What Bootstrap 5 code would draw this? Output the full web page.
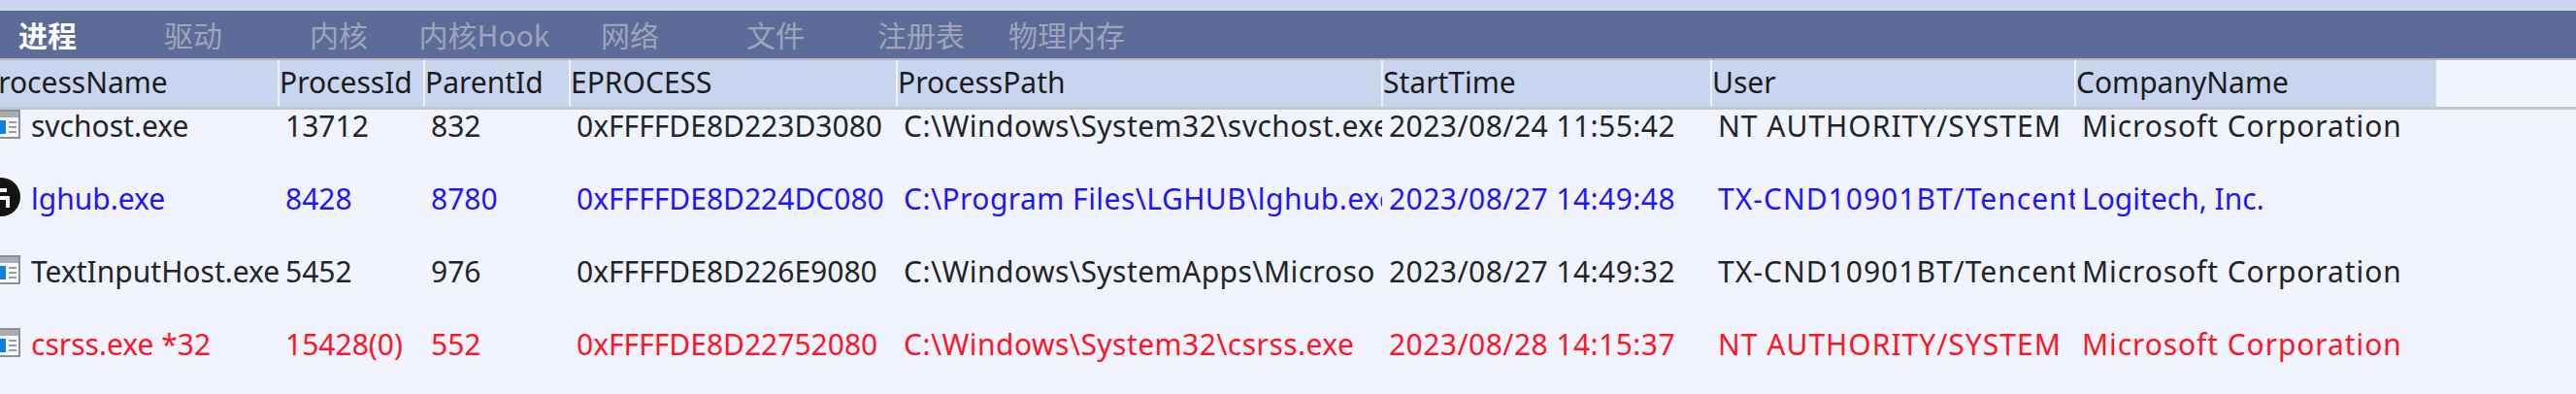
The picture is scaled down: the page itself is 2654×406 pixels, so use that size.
<!DOCTYPE html>
<html lang="zh-CN">
<head>
<meta charset="utf-8">
<title>进程</title>
<link href="https://cdn.jsdelivr.net/npm/bootstrap@5.3.0/dist/css/bootstrap.min.css" rel="stylesheet">
<style>
html,body{height:100%;}
body{background:#f1f4fc;overflow:hidden;font-family:"Noto Sans","Noto Sans CJK SC",sans-serif;font-size:30px;color:#1c1c1c;}
.top-strip{height:11px;background:#cdd6f0;}
.tab-bar{height:49px;background:#5d6b98;margin-bottom:0;}
.tab-row{margin-left:-26px;flex-wrap:nowrap;height:100%;}
.tab-row .nav-link{width:150px;padding:0;color:#9ea5bb;font-size:30px;line-height:49px;text-align:center;white-space:nowrap;font-family:"Noto Sans CJK SC","Noto Sans",sans-serif;}
.tab-row .nav-link.active{color:#fff;font-weight:700;}
.rule-a{height:2px;background:#b3b7c2;}
.head-wrap{height:48px;overflow:hidden;}
.rule-b{height:3px;background:#c3c6cc;}
.body-wrap{height:293px;overflow:hidden;}
.proc-table{table-layout:fixed;width:2530px;margin:0 0 0 -20px;border-collapse:collapse;--bs-table-bg:transparent;}
.proc-table th,.proc-table td{padding:0;border:0;overflow:hidden;white-space:nowrap;box-shadow:none;}
.w1{width:307px}.w2{width:150px}.w3{width:150px}.w4{width:337px}.w5{width:500px}.w6{width:339px}.w7{width:375px}.w8{width:372px}
.head-table th{height:48px;background:#c9d5ef;font-weight:400;color:#1c1c1c;padding:0 0 5px 0;border-right:2px solid #eef1fa;font-size:30px;line-height:40px;}
.head-table th:last-child{border-right:0;}
.body-table{margin-top:-21px;}
.body-table td{height:75px;padding-left:7px;padding-top:1px;color:inherit;vertical-align:middle;line-height:40px;}
.body-table td:first-child{padding-left:9px;padding-top:0;}
.name-cell{display:flex;align-items:center;gap:11px;height:75px;}
.name-cell span{padding-top:1px;}
.ico{flex:none;width:32px;height:30px;margin-top:-4px;}
.ico-round{flex:none;width:40px;height:40px;margin-left:-8px;margin-top:-4px;}
.tone-blue td{color:#1e14ff;}
.tone-red td{color:#ff1426;}
.spread-s{letter-spacing:.45px;}
.spread-m{letter-spacing:1px;}
.spread-l{letter-spacing:.9px;}
</style>
</head>
<body>
<div class="top-strip"></div>
<div class="tab-bar overflow-hidden">
  <nav class="nav tab-row">
    <a class="nav-link active" href="#">进程</a>
    <a class="nav-link" href="#">驱动</a>
    <a class="nav-link" href="#">内核</a>
    <a class="nav-link" href="#">内核Hook</a>
    <a class="nav-link" href="#">网络</a>
    <a class="nav-link" href="#">文件</a>
    <a class="nav-link" href="#">注册表</a>
    <a class="nav-link" href="#">物理内存</a>
  </nav>
</div>
<div class="rule-a"></div>
<div class="head-wrap">
  <table class="table proc-table head-table">
    <colgroup><col class="w1"><col class="w2"><col class="w3"><col class="w4"><col class="w5"><col class="w6"><col class="w7"><col class="w8"></colgroup>
    <thead><tr><th>ProcessName</th><th>ProcessId</th><th>ParentId</th><th>EPROCESS</th><th>ProcessPath</th><th>StartTime</th><th>User</th><th>CompanyName</th></tr></thead>
  </table>
</div>
<div class="rule-b"></div>
<div class="body-wrap">
  <table class="table proc-table body-table">
    <colgroup><col class="w1"><col class="w2"><col class="w3"><col class="w4"><col class="w5"><col class="w6"><col class="w7"><col class="w8"></colgroup>
    <tbody>
      <tr>
        <td><div class="name-cell"><svg class="ico" viewBox="0 0 32 30"><rect x="1" y="1" width="30" height="28" fill="#f7f8fa" stroke="#8c8f94" stroke-width="2"/><rect x="2" y="2" width="28" height="6" fill="#a9acb2"/><rect x="4" y="11" width="13" height="14" fill="#0f7fd8"/><path d="M20 13h8M20 18h8M20 23h8" stroke="#9a9da3" stroke-width="2"/></svg><span>svchost.exe</span></div></td>
        <td>13712</td><td>832</td><td>0xFFFFDE8D223D3080</td><td class="spread-s">C:\Windows\System32\svchost.exe</td><td class="spread-s">2023/08/24 11:55:42</td><td class="spread-m">NT AUTHORITY/SYSTEM</td><td class="spread-l">Microsoft Corporation</td>
      </tr>
      <tr class="tone-blue">
        <td><div class="name-cell"><svg class="ico-round" viewBox="0 0 40 40"><circle cx="20" cy="20" r="20" fill="#141414"/><path d="M18 11h8v4h-8z" fill="#fff"/><path d="M17 19h12v12h-4v-8h-8z" fill="#fff"/></svg><span>lghub.exe</span></div></td>
        <td>8428</td><td>8780</td><td>0xFFFFDE8D224DC080</td><td class="spread-s">C:\Program Files\LGHUB\lghub.exe</td><td class="spread-s">2023/08/27 14:49:48</td><td class="spread-m">TX-CND10901BT/Tencent</td><td>Logitech, Inc.</td>
      </tr>
      <tr>
        <td><div class="name-cell"><svg class="ico" viewBox="0 0 32 30"><rect x="1" y="1" width="30" height="28" fill="#f7f8fa" stroke="#8c8f94" stroke-width="2"/><rect x="2" y="2" width="28" height="6" fill="#a9acb2"/><rect x="4" y="11" width="13" height="14" fill="#0f7fd8"/><path d="M20 13h8M20 18h8M20 23h8" stroke="#9a9da3" stroke-width="2"/></svg><span>TextInputHost.exe</span></div></td>
        <td>5452</td><td>976</td><td>0xFFFFDE8D226E9080</td><td class="spread-s">C:\Windows\SystemApps\Microso</td><td class="spread-s">2023/08/27 14:49:32</td><td class="spread-m">TX-CND10901BT/Tencent</td><td class="spread-l">Microsoft Corporation</td>
      </tr>
      <tr class="tone-red">
        <td><div class="name-cell"><svg class="ico" viewBox="0 0 32 30"><rect x="1" y="1" width="30" height="28" fill="#f7f8fa" stroke="#8c8f94" stroke-width="2"/><rect x="2" y="2" width="28" height="6" fill="#a9acb2"/><rect x="4" y="11" width="13" height="14" fill="#0f7fd8"/><path d="M20 13h8M20 18h8M20 23h8" stroke="#9a9da3" stroke-width="2"/></svg><span>csrss.exe *32</span></div></td>
        <td>15428(0)</td><td>552</td><td>0xFFFFDE8D22752080</td><td class="spread-s">C:\Windows\System32\csrss.exe</td><td class="spread-s">2023/08/28 14:15:37</td><td class="spread-m">NT AUTHORITY/SYSTEM</td><td class="spread-l">Microsoft Corporation</td>
      </tr>
    </tbody>
  </table>
</div>
<script src="https://cdn.jsdelivr.net/npm/bootstrap@5.3.0/dist/js/bootstrap.bundle.min.js"></script>
</body>
</html>
